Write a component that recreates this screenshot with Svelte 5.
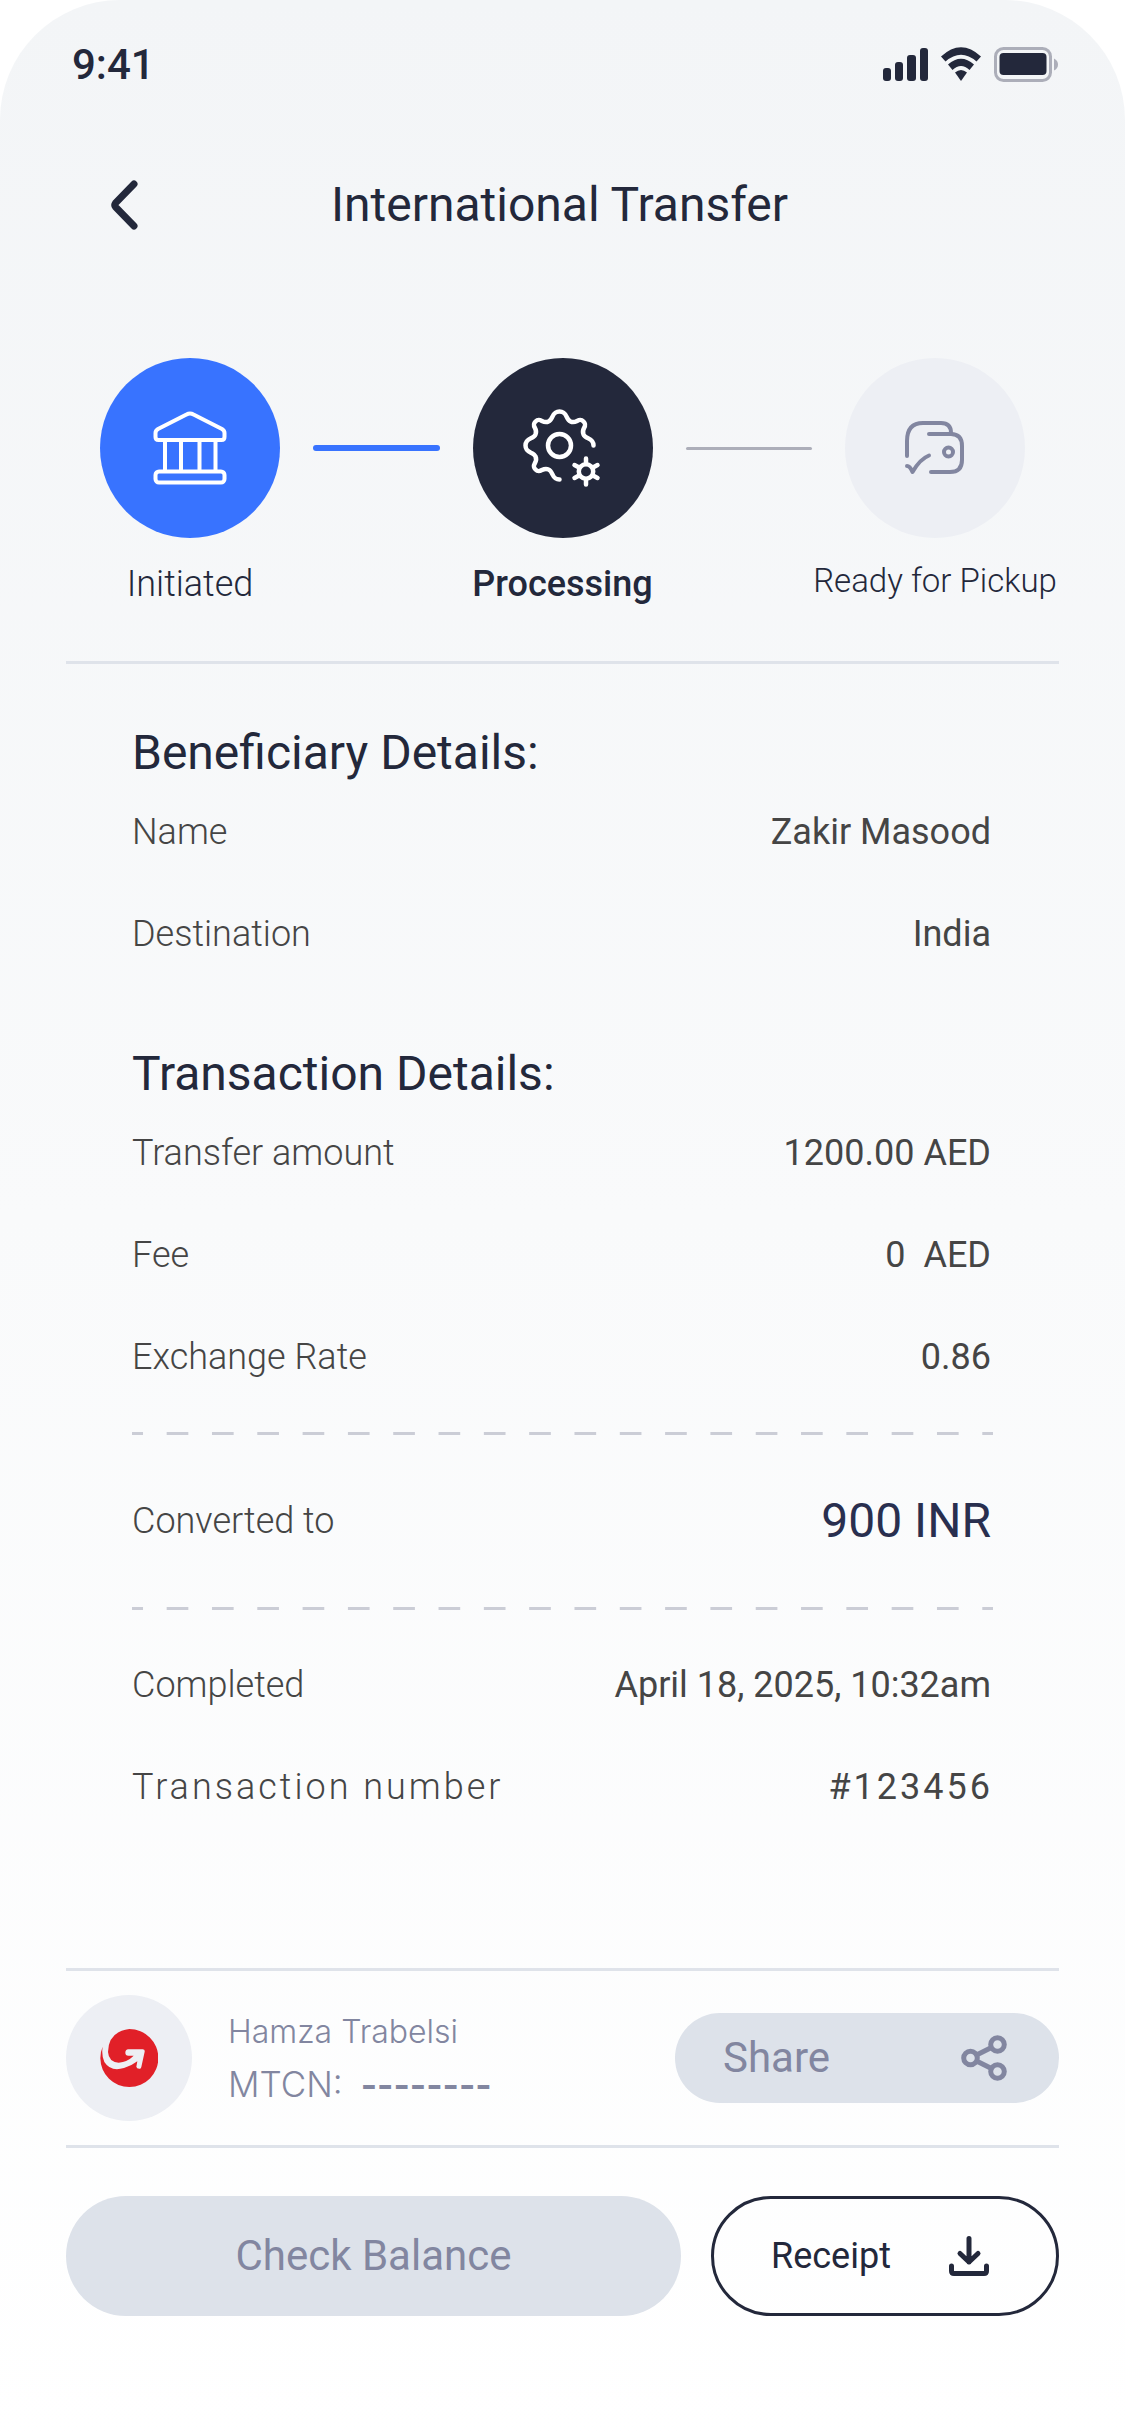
<script lang="ts">
  type Row = { label: string; value: string; spaced?: boolean };

  const beneficiary: Row[] = [
    { label: 'Name', value: 'Zakir Masood' },
    { label: 'Destination', value: 'India' },
  ];

  const transaction: Row[] = [
    { label: 'Transfer amount', value: '1200.00 AED' },
    { label: 'Fee', value: '0\u00a0 AED' },
    { label: 'Exchange Rate', value: '0.86' },
  ];

  const summary: Row[] = [
    { label: 'Completed', value: 'April 18, 2025, 10:32am' },
    { label: 'Transaction number', value: '#123456', spaced: true },
  ];
</script>

{#snippet rows(items: Row[])}
  <dl class="rows">
    {#each items as item}
      <div class="row" class:spaced={item.spaced}>
        <dt>{item.label}</dt>
        <dd>{item.value}</dd>
      </div>
    {/each}
  </dl>
{/snippet}

<div class="screen">
  <div class="status">
    <span class="time">9:41</span>
    <svg class="status-icons" viewBox="0 0 176 36" aria-hidden="true">
      <g fill="#23283b">
        <rect x="0" y="21" width="8" height="13" rx="3" />
        <rect x="12" y="15" width="8" height="19" rx="3" />
        <rect x="24" y="8" width="9" height="26" rx="3" />
        <rect x="37" y="1" width="8" height="33" rx="3" />
        <path d="M58 9.500 Q78 -9 98 9.500 L93.500 14.500 Q78 1 62.500 14.500 Z" />
        <path d="M65 17.500 Q78 6 91 17.500 L86.500 23 Q78 15 69.500 23 Z" />
        <path d="M72 25.500 Q78 20.500 84 25.500 L78 34 Z" />
        <rect x="116.500" y="6" width="47" height="22" rx="4" />
      </g>
      <rect x="112.500" y="1.500" width="55" height="32" rx="8" fill="none" stroke="#acaeb9" stroke-width="3" />
      <path d="M171 11.500 Q175 13.500 175 17.500 Q175 21.500 171 23.500 Z" fill="#acaeb9" />
    </svg>
  </div>

  <header>
    <button class="back" aria-label="Back">
      <svg viewBox="0 0 28 50" aria-hidden="true">
        <path d="M24 4 L5.500 23 Q4 25 5.500 27 L24 46" />
      </svg>
    </button>
    <h1>International Transfer</h1>
  </header>

  <div class="steps">
    <div class="step">
      <div class="disc done">
        <svg viewBox="0 0 74 74" fill="none" stroke="#fff" stroke-width="4" stroke-linejoin="round" aria-hidden="true">
          <path d="M33.500 3.500 Q37 1.500 40.500 3.500 L69 18 Q71.500 19.500 71.500 22 L71.500 26 Q71.500 29 68.500 29 L5.500 29 Q2.500 29 2.500 26 L2.500 22 Q2.500 19.500 5 18 Z" />
          <path d="M12 29 V60 M28 29 V60 M46.500 29 V60 M62.500 29 V60" />
          <rect x="2.500" y="60.500" width="69" height="11" rx="3.500" />
        </svg>
      </div>
      <span class="name">Initiated</span>
    </div>
    <span class="link done"></span>
    <div class="step">
      <div class="disc active">
        <svg class="gears" viewBox="0 0 80 80" fill="none" stroke="#fff" stroke-width="4.500" stroke-linecap="round" stroke-linejoin="round" aria-hidden="true">
          <g transform="translate(36.500 37.500)">
            <path d="M34 0 C34 -8 26 -6 24 -11 C21 -17 29 -19 24 -24 C19 -29 17 -21 11 -24 C6 -26 8 -34 0 -34 C-8 -34 -6 -26 -11 -24 C-17 -21 -19 -29 -24 -24 C-29 -19 -21 -17 -24 -11 C-26 -6 -34 -8 -34 0 C-34 8 -26 6 -24 11 C-21 17 -29 19 -24 24 C-19 29 -17 21 -11 24 C-6 26 -8 34 0 34" />
            <circle r="11.500" />
          </g>
          <g transform="translate(63 63.500)">
            <circle r="7.200" />
            <path d="M0 -8 V-13 M0 8 V13 M7 -4 L11.500 -6.500 M7 4 L11.500 6.500 M-7 -4 L-11.500 -6.500 M-7 4 L-11.500 6.500" />
          </g>
        </svg>
      </div>
      <span class="name">Processing</span>
    </div>
    <span class="link"></span>
    <div class="step">
      <div class="disc">
        <svg class="wallet" viewBox="0 0 60 56" fill="none" stroke="#8286a0" stroke-width="4" stroke-linecap="round" stroke-linejoin="round" aria-hidden="true">
          <path d="M2 36 V21 Q2 3 18 3 H36 Q46 3 46 13" />
          <path d="M24 14 H46 Q57 14 57 26 V40 Q57 52 45 52 H26" />
          <circle cx="43.500" cy="32" r="4.500" />
          <path d="M2 46 Q5 46 7.500 52 Q15 39 24 35.500" />
        </svg>
      </div>
      <span class="name small">Ready for Pickup</span>
    </div>
  </div>

  <main>
    <section>
      <h2>Beneficiary Details:</h2>
      {@render rows(beneficiary)}
    </section>
    <section>
      <h2>Transaction Details:</h2>
      {@render rows(transaction)}
      <dl class="converted">
        <div class="row">
          <dt>Converted to</dt>
          <dd>900 INR</dd>
        </div>
      </dl>
      {@render rows(summary)}
    </section>
  </main>

  <div class="agent">
    <div class="avatar">
      <svg viewBox="120 237 174 174" aria-hidden="true">
        <path fill="#e12028" d="M208 237 A87 87 0 1 1 121 325 Q121 305 128 290 Q124 318 133 336 Q152 366 192 354 Q214 348 232 334 L229 350 Q230 357 240 356 Q243 356 244 351 L254 305 Q255 298 248 298 L205 298 Q196 299 196 308 Q196 317 205 317 L221 317 Q202 336 176 338 Q146 336 144 306 Q145 245 208 237 Z" />
      </svg>
    </div>
    <div class="who">
      <span>Hamza Trabelsi</span>
      <span class="mtcn">MTCN: <b>--------</b></span>
    </div>
    <button class="share">
      Share
      <svg viewBox="0 0 46 46" fill="none" stroke="#8286a0" stroke-width="5" aria-hidden="true">
        <circle cx="9.500" cy="23" r="6.800" />
        <circle cx="36.500" cy="9.500" r="6.800" />
        <circle cx="36.500" cy="36.500" r="6.800" />
        <path d="M15.500 20 L30.500 12.500 M15.500 26 L30.500 33.500" />
      </svg>
    </button>
  </div>

  <footer>
    <button class="balance">Check Balance</button>
    <button class="receipt">
      Receipt
      <svg viewBox="0 0 40 40" fill="none" stroke="#23283b" stroke-width="5" stroke-linecap="round" stroke-linejoin="round" aria-hidden="true">
        <path d="M20 2.500 V26 M11 17.500 L20 26 L29 17.500" />
        <path d="M2.500 30 V35 Q2.500 37.500 5 37.500 H35 Q37.500 37.500 37.500 35 V30" />
      </svg>
    </button>
  </footer>
</div>

<style>
  :global(body) {
    background: #fff;
  }
  .screen {
    min-height: 100vh;
    box-sizing: border-box;
    padding: 36px 66px 120px;
    border-radius: 120px 120px 0 0;
    background: linear-gradient(180deg, #f3f5f7, #fff);
    color: #23283b;
    font-family: Roboto, "Liberation Sans", sans-serif;
    font-size: 36px;
    line-height: 42px;
  }
  h1,
  h2,
  dl,
  dd {
    margin: 0;
  }
  h1,
  h2 {
    font-size: 48px;
    line-height: 56px;
    font-weight: 400;
  }
  svg {
    display: block;
    flex: none;
  }
  button {
    font: inherit;
    cursor: pointer;
  }
  .status {
    display: flex;
    justify-content: space-between;
    align-items: center;
    height: 58px;
    padding: 0 0 0 6px;
  }
  .time {
    font-size: 42px;
    font-weight: 500;
  }
  .status-icons {
    width: 176px;
    height: 36px;
  }
  header {
    display: grid;
    grid-template-columns: 48px 1fr 48px;
    align-items: center;
    margin-top: 83px;
    padding: 0 40px 0 34px;
  }
  .back {
    padding: 0 10px;
    border: 0;
    background: none;
  }
  .back svg {
    width: 28px;
    height: 50px;
    fill: none;
    stroke: #23283b;
    stroke-width: 7;
    stroke-linecap: round;
  }
  h1 {
    text-align: center;
  }
  .steps {
    display: flex;
    margin-top: 125px;
    padding: 0 34px 56px;
    border-bottom: 3px solid #dfe3ea;
  }
  .step {
    display: flex;
    flex-direction: column;
    align-items: center;
    gap: 25px;
    width: 180px;
    white-space: nowrap;
  }
  .disc {
    display: flex;
    align-items: center;
    justify-content: center;
    width: 180px;
    height: 180px;
    border-radius: 50%;
    background: #edeff4;
  }
  .disc.done { background: #3873ff; }
  .disc.active { background: #23283b; }
  .disc svg {
    width: 74px;
    height: 74px;
  }
  .disc svg.gears {
    width: 80px;
    height: 80px;
  }
  .disc svg.wallet {
    width: 60px;
    height: 56px;
  }
  .name {
    font-weight: 300;
  }
  .disc.active + .name {
    font-weight: 500;
  }
  .name.small {
    font-size: 33px;
    line-height: 36px;
  }
  .link {
    flex: 1;
    height: 3px;
    margin: 89px 33px 0;
    border-radius: 3px;
    background: #acaeb9;
  }
  .link.done {
    height: 6px;
    margin-top: 87px;
    background: #3873ff;
  }
  main {
    display: grid;
    gap: 91px;
    padding: 61px 66px 160px;
  }
  .rows {
    display: grid;
    gap: 60px;
  }
  h2 + :global(.rows) {
    margin-top: 30px;
  }
  .row {
    display: flex;
    justify-content: space-between;
    align-items: center;
    padding-right: 2px;
    color: #454545;
  }
  dt {
    font-weight: 300;
  }
  .row.spaced {
    padding-right: 0;
    letter-spacing: 3px;
  }
  .converted {
    margin: 54px 0;
    padding: 61px 0;
    --dash: linear-gradient(90deg, #cbcdd6 23%, transparent 23% 77%, #cbcdd6 77%);
    background: var(--dash) top / 45px 3px round no-repeat, var(--dash) bottom / 45px 3px round no-repeat;
  }
  .converted dd {
    font-size: 48px;
    line-height: 56px;
    color: #292f4f;
  }
  .agent {
    display: flex;
    align-items: center;
    padding: 24px 0;
    border-top: 3px solid #dfe3ea;
    border-bottom: 3px solid #dfe3ea;
  }
  .avatar {
    display: flex;
    align-items: center;
    justify-content: center;
    width: 126px;
    height: 126px;
    border-radius: 50%;
    background: #edeff4;
  }
  .avatar svg {
    width: 58px;
    height: 58px;
  }
  .who {
    display: grid;
    gap: 10px;
    margin: 0 auto 0 36px;
    color: #8286a0;
    font-family: Inter, sans-serif;
    font-size: 32px;
    font-weight: 300;
  }
  .mtcn {
    display: flex;
    gap: 18px;
    font-size: 35px;
  }
  .mtcn b {
    font-weight: 700;
  }
  .share {
    display: flex;
    justify-content: space-between;
    align-items: center;
    width: 384px;
    height: 90px;
    padding: 0 52px 0 48px;
    border: 0;
    border-radius: 45px;
    background: #dde2ea;
    color: #8286a0;
    font-size: 42px;
  }
  .share svg {
    width: 46px;
    height: 46px;
  }
  footer {
    display: flex;
    gap: 30px;
    margin-top: 48px;
  }
  footer button {
    height: 120px;
    border-radius: 60px;
  }
  .balance {
    flex: 1;
    border: 0;
    background: #dde2ea;
    color: #8286a0;
    font-size: 42px;
  }
  .receipt {
    display: flex;
    justify-content: space-between;
    align-items: center;
    width: 348px;
    padding: 0 67px 0 57px;
    border: 3px solid #23283b;
    background: none;
    color: #23283b;
  }
  .receipt svg {
    width: 40px;
    height: 40px;
  }
</style>
